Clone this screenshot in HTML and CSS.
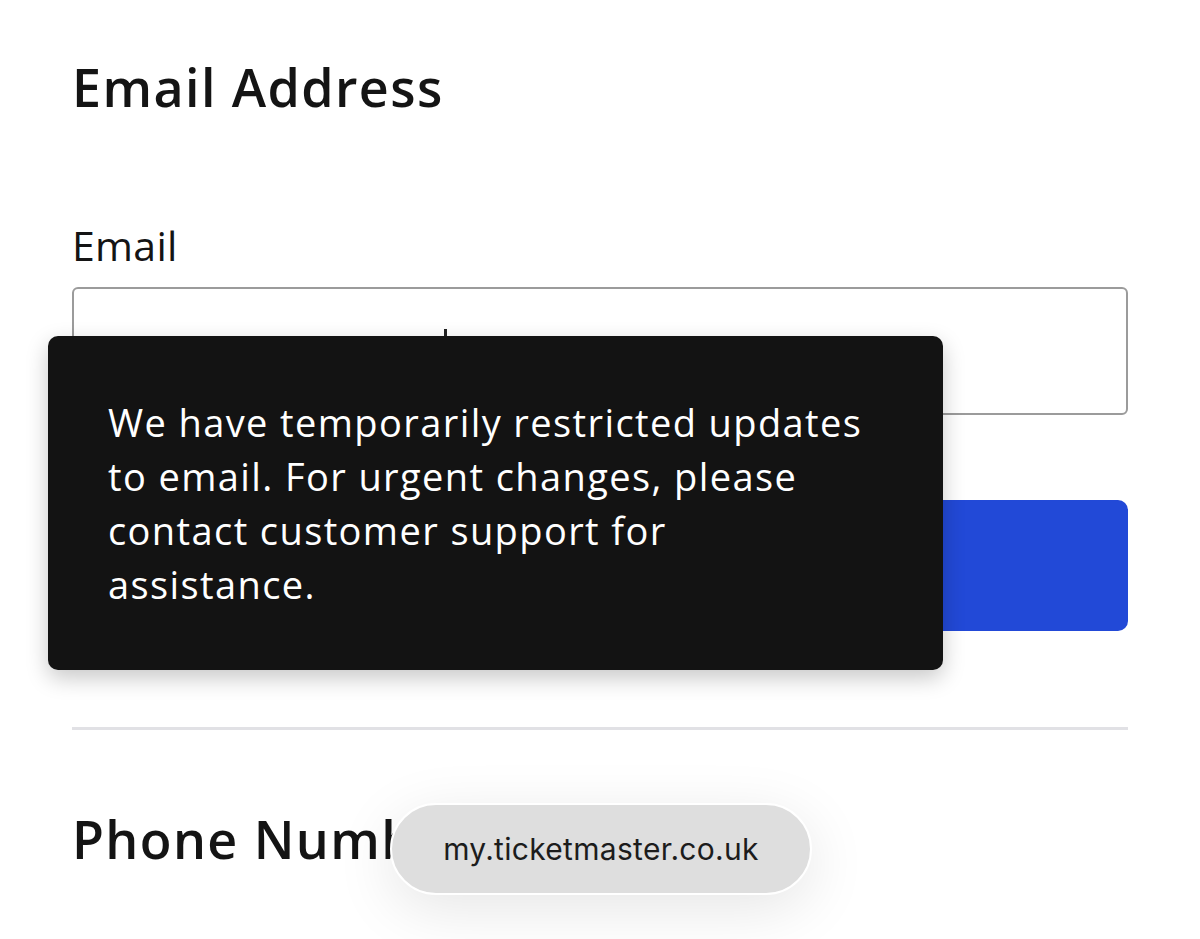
FILE: index.html
```html
<!DOCTYPE html>
<html lang="en">
<head>
<meta charset="utf-8">
<title>Email Address</title>
<link rel="stylesheet" href="styles.css">
</head>
<body>
<main class="page">
  <section class="section">
    <h2 class="section-title">Email Address</h2>
    <label class="field-label" for="email">Email</label>
    <div class="input-wrap">
      <div class="input" id="email"></div>
      <span class="caret"></span>
    </div>
    <div class="btn"></div>
  </section>
  <hr class="divider">
  <section class="section">
    <h2 class="section-title phone">Phone Number</h2>
  </section>

  <div class="tooltip">
    <p>We have temporarily restricted updates<br>to email. For urgent changes, please<br>contact customer support for<br>assistance.</p>
  </div>

  <div class="url-pill">my.ticketmaster.co.uk</div>
</main>
</body>
</html>
```

FILE: styles.css
```css
* { box-sizing: border-box; }
html, body {
  margin: 0;
  padding: 0;
  background: #ffffff;
}
body {
  width: 1200px;
  height: 939px;
  overflow: hidden;
  font-family: "Open Sans", "Lato", sans-serif;
  color: #141414;
}
.page {
  position: relative;
  width: 1200px;
  height: 939px;
  padding: 56px 72px 0 72px;
}
.section-title {
  margin: 0;
  font-size: 52px;
  line-height: 1.2;
  font-weight: 600;
  letter-spacing: 1.4px;
  color: #141414;
}
.field-label {
  display: block;
  margin-top: 103px;
  font-size: 41px;
  line-height: 1.2;
  font-weight: 400;
  letter-spacing: 0.3px;
  color: #141414;
}
.input-wrap {
  position: relative;
  margin-top: 16px;
}
.input {
  height: 128px;
  border: 2.5px solid #9b9b9b;
  border-radius: 6px;
  background: #fff;
}
.caret {
  position: absolute;
  left: 372px;
  top: 42px;
  width: 3px;
  height: 10px;
  background: #222;
}
.btn {
  margin-top: 85px;
  height: 131px;
  border-radius: 10px;
  background: #2249d7;
}
.divider {
  margin: 96px 0 0 0;
  height: 3px;
  border: 0;
  background: #e1e1e5;
}
.phone {
  margin-top: 78px;
}
.tooltip {
  position: absolute;
  left: 48px;
  top: 336px;
  width: 895px;
  height: 334px;
  padding: 59px 60px;
  background: #131313;
  border-radius: 10px;
  box-shadow: 0 8px 22px rgba(0, 0, 0, 0.22);
}
.tooltip p {
  margin: 0;
  font-size: 38px;
  line-height: 54px;
  color: #ffffff;
  letter-spacing: 1.4px;
  white-space: nowrap;
}
.url-pill {
  position: absolute;
  left: 390px;
  top: 803px;
  width: 422px;
  height: 92px;
  display: flex;
  align-items: center;
  justify-content: center;
  background: #dedede;
  border: 2px solid #ffffff;
  border-radius: 46px;
  box-shadow: 0 14px 60px rgba(0, 0, 0, 0.10);
  font-family: "Inter", "Noto Sans", sans-serif;
  font-size: 30px;
  color: #1c1c1c;
  letter-spacing: 0.3px;
}
```
